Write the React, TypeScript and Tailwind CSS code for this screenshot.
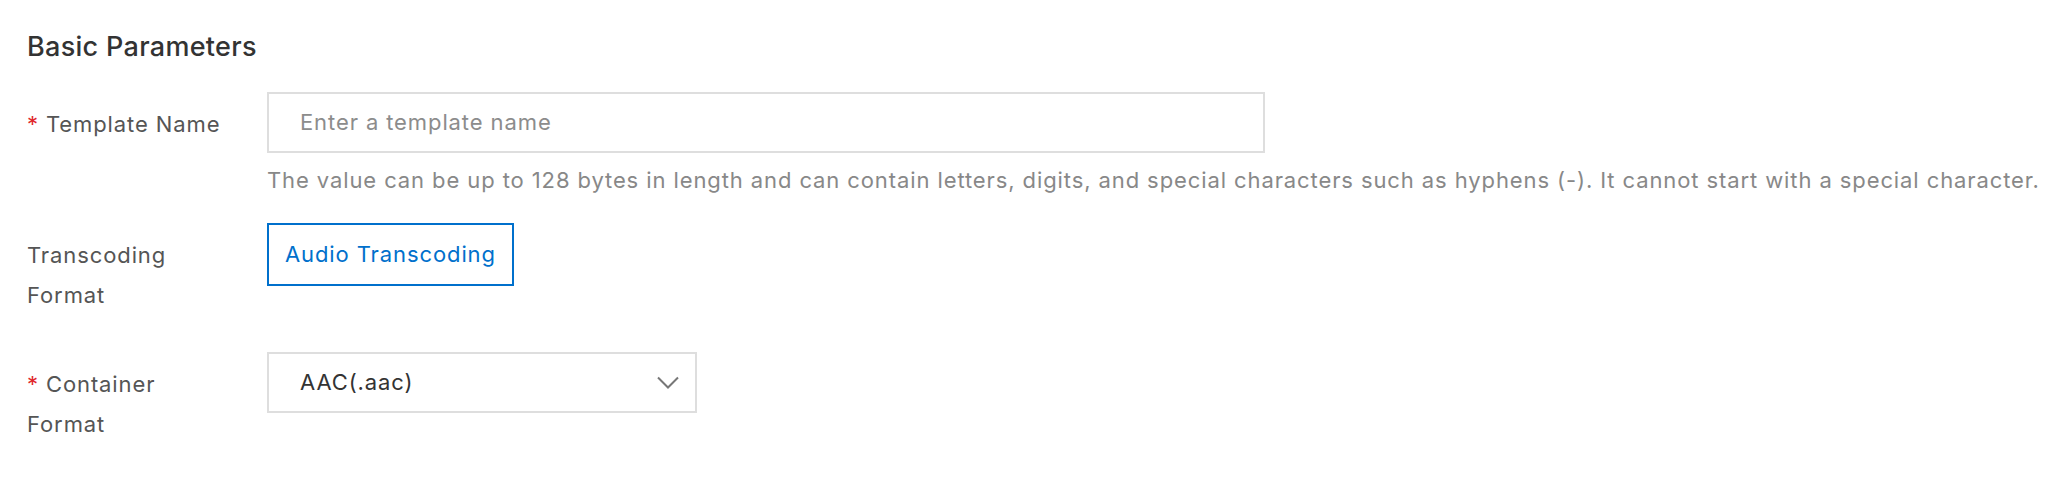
import React from "react";

function Label({ required, children }: { required?: boolean; children: React.ReactNode }) {
  return (
    <div className="w-[240px] shrink-0 pt-[12px] text-[22px] leading-[40px] tracking-[0.9px] text-[#555]">
      {required && <span className="mr-[7px] text-[#e0262b]">*</span>}
      {children}
    </div>
  );
}

export default function App() {
  return (
    <div
      className="w-full h-[480px] bg-white px-[27px] pt-[29px]"
      style={{ fontFamily: "Inter, 'Noto Sans', sans-serif" }}
    >
      <h2 className="text-[27px] leading-[36px] font-medium tracking-[0.3px] text-[#333]">Basic Parameters</h2>

      {/* Template name */}
      <div className="mt-[27px] flex">
        <Label required>Template Name</Label>
        <div>
          <div className="w-[998px] h-[61px] border-2 border-[#dedede] px-[31px] flex items-center text-[22px] tracking-[0.9px] text-[#8c8c8c]">
            Enter a template name
          </div>
          <p className="mt-[13px] text-[22px] leading-[28px] tracking-[0.9px] text-[#888] whitespace-nowrap">
            The value can be up to 128 bytes in length and can contain letters, digits, and special characters such as hyphens (-). It cannot start with a special character.
          </p>
        </div>
      </div>

      {/* Transcoding format */}
      <div className="mt-[29px] flex">
        <Label>
          Transcoding
          <br />
          Format
        </Label>
        <div>
          <button className="h-[63px] px-[16px] border-2 border-[#0070cc] text-[#0070cc] text-[22px] tracking-[0.9px] flex items-center">
            Audio Transcoding
          </button>
        </div>
      </div>

      {/* Container format */}
      <div className="mt-[37px] flex">
        <Label required>
          Container
          <br />
          Format
        </Label>
        <div>
          <div className="w-[430px] h-[61px] border-2 border-[#dedede] pl-[31px] pr-[16px] flex items-center justify-between text-[22px] tracking-[0.9px] text-[#333]">
            <span>AAC(.aac)</span>
            <svg width="22" height="13" viewBox="0 0 22 13" fill="none">
              <path d="M1 1.5 L11 11.5 L21 1.5" stroke="#777" strokeWidth="2" />
            </svg>
          </div>
        </div>
      </div>
    </div>
  );
}
